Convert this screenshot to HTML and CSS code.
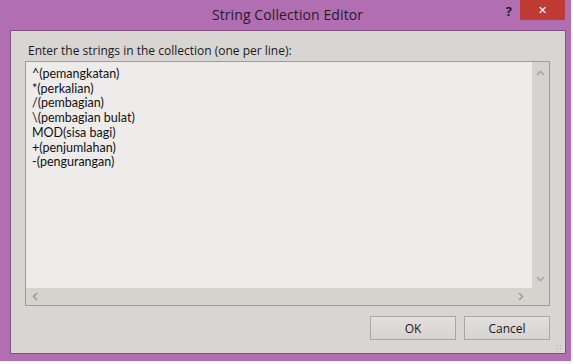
FILE: index.html
```html
<!DOCTYPE html>
<html lang="en">
<head>
  <meta charset="UTF-8" />
  <title>String Collection Editor</title>
  <link rel="stylesheet" href="styles.css">
</head>
<body>
  <div class="window">
    <div class="titlebar">
      <span></span>
      <h1 class="title">String Collection Editor</h1>
      <div class="controls">
        <span class="help">?</span>
        <span class="close">&#x2715;</span>
      </div>
    </div>

    <div class="client">
      <label class="prompt" for="lines">Enter the strings in the collection (one per line):</label>

      <div class="editor">
        <div class="editor-body">
          <div class="lines" id="lines">
            <div>^(pemangkatan)</div>
            <div>*(perkalian)</div>
            <div>/(pembagian)</div>
            <div>\(pembagian bulat)</div>
            <div>MOD(sisa bagi)</div>
            <div>+(penjumlahan)</div>
            <div>-(pengurangan)</div>
          </div>
          <div class="vscroll">
            <svg width="9" height="6" viewBox="0 0 9 6"><path d="M1 5 L4.5 1.5 L8 5" fill="none" stroke="#a8a5a2" stroke-width="1.6"/></svg>
            <svg width="9" height="6" viewBox="0 0 9 6"><path d="M1 1 L4.5 4.5 L8 1" fill="none" stroke="#a8a5a2" stroke-width="1.6"/></svg>
          </div>
        </div>
        <div class="hscroll">
          <svg width="6" height="9" viewBox="0 0 6 9"><path d="M5 1 L1.5 4.5 L5 8" fill="none" stroke="#9d9a97" stroke-width="1.6"/></svg>
          <svg width="6" height="9" viewBox="0 0 6 9"><path d="M1 1 L4.5 4.5 L1 8" fill="none" stroke="#9d9a97" stroke-width="1.6"/></svg>
        </div>
      </div>

      <div class="buttons">
        <button>OK</button>
        <button>Cancel</button>
      </div>
      <div class="grip"></div>
    </div>
  </div>
</body>
</html>
```

FILE: styles.css
```css
* {
  margin: 0;
  padding: 0;
  box-sizing: border-box;
}

body {
  background: #ffffff;
  font-family: "Open Sans", "Noto Sans", sans-serif;
  color: #1a1a1a;
}

.window {
  width: 571px;
  height: 361px;
  background: #b16fb2;
  padding: 0 5px 7px 10px;
  display: flex;
  flex-direction: column;
}

.titlebar {
  height: 30px;
  display: grid;
  grid-template-columns: 1fr auto 1fr;
  margin-left: -10px;
  margin-right: -5px;
}

.title {
  font-size: 14px;
  font-weight: 400;
  color: #2a1a2a;
  line-height: 30px;
  letter-spacing: 0.1px;
  padding-left: 4px;
}

.controls {
  display: flex;
  justify-content: flex-end;
  align-items: flex-start;
  padding-right: 6px;
}

.help {
  font-size: 13px;
  font-weight: 700;
  color: #2a1a2a;
  line-height: 22px;
  margin-right: 8px;
}

.close {
  width: 45px;
  height: 20px;
  background: #bf3a32;
  color: #fff;
  font-size: 11px;
  line-height: 20px;
  text-align: center;
}

.client {
  flex: 1;
  background: #d8d5d2;
  border: 1px solid #7e4f80;
  padding: 12px 15px 0 14px;
  display: flex;
  flex-direction: column;
}

.prompt {
  font-size: 12px;
  line-height: 16px;
  padding-left: 3px;
  margin-bottom: 2px;
}

.editor {
  height: 245px;
  border: 1px solid #8ca0b3;
  background: #eeecea;
  display: flex;
  flex-direction: column;
}

.editor-body {
  flex: 1;
  display: flex;
}

.lines {
  flex: 1;
  padding: 5px 0 0 6px;
  font-family: Lato, "Open Sans", sans-serif;
  font-size: 12.5px;
  line-height: 14.7px;
  color: #111;
}

.vscroll {
  width: 17px;
  background: #d6d3cf;
  display: flex;
  flex-direction: column;
  justify-content: space-between;
  align-items: center;
  padding: 8px 0 6px;
}

.hscroll {
  height: 17px;
  background: #d6d3cf;
  display: flex;
  justify-content: space-between;
  align-items: center;
  padding: 0 25px 0 6px;
}

.buttons {
  display: flex;
  justify-content: flex-end;
  gap: 8px;
  margin-top: 10px;
}

.buttons button {
  width: 86px;
  height: 24px;
  font-family: "Open Sans", "Noto Sans", sans-serif;
  font-size: 12px;
  color: #1a1a1a;
  background: linear-gradient(#e2dfdc, #d6d3d0);
  border: 1px solid #aaa7a4;
}

.grip {
  align-self: flex-end;
  margin: auto -13px 2px 0;
  width: 7px;
  height: 7px;
  background: radial-gradient(circle, #aaa7a4 0.8px, transparent 1px) 0 0 / 3px 3px;
}
```
